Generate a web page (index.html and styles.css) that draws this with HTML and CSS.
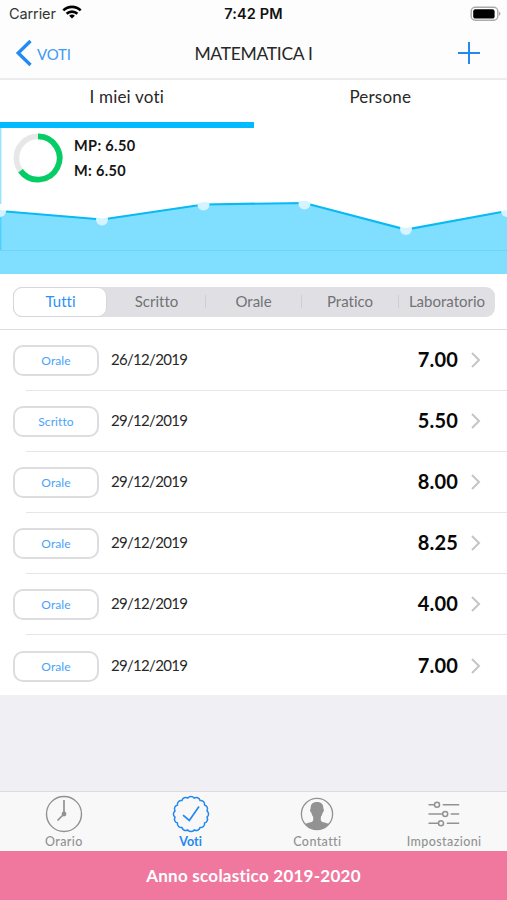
FILE: index.html
```html
<!DOCTYPE html>
<html lang="it">
<head>
<meta charset="utf-8">
<meta name="viewport" content="width=device-width">
<title>Matematica I</title>
<link rel="stylesheet" href="styles.css">
</head>
<body>
<header class="top">
  <div class="status">
    <div class="carrier"><span>Carrier</span>
      <svg width="20" height="14" viewBox="0 0 20 14" fill="none" stroke="#000" stroke-width="2.6"><path d="M1.3 5.4a12.5 12.5 0 0 1 17.4 0M4.6 8.8a7.8 7.8 0 0 1 10.8 0"/><path d="M10 13.6 7.1 10.8a4.2 4.2 0 0 1 5.8 0Z" fill="#000" stroke="none"/></svg>
    </div>
    <span class="time">7:42 PM</span>
    <svg class="battery" width="32" height="16" viewBox="0 0 32 16"><rect x="1.2" y="1.2" width="26.6" height="13" rx="4" fill="#fff" stroke="#aaa" stroke-width="1.4"/><rect x="3.2" y="3.2" width="21.4" height="9.4" rx="2.2"/><path d="M29 5.5q3 2.200 0 4.500Z" fill="#aaa"/></svg>
  </div>
  <nav class="nav">
    <a class="back"><svg width="18" height="28" viewBox="0 0 18 28"><path d="M15.500 2 3.200 14l12.300 12" fill="none" stroke="#2389f3" stroke-width="3.300"/></svg><span>VOTI</span></a>
    <h1 class="title">MATEMATICA I</h1>
    <svg class="plus" width="22" height="22" viewBox="0 0 22 22"><path d="M11 0v22M0 11h22" stroke="#2588f2" stroke-width="2"/></svg>
  </nav>
</header>
<div class="tabs"><div class="tab active"><span class="mine">I miei voti</span></div><div class="tab"><span class="people">Persone</span></div></div>
<section class="chart">
  <svg class="plot" width="507" height="146" viewBox="0 128 507 146">
    <path d="M0 211 102 219.500 203.500 204.500 304.500 203 406 229.500 507 211V274H0Z" fill="#80dfff"/>
    <path d="M0 250.500H507" stroke="#6bd5fa"/>
    <path d="M.7 128V250" stroke="#00bfff" stroke-opacity=".4" stroke-width="1.400"/>
    <path d="M0 211 102 219.500 203.500 204.500 304.500 203 406 229.500 507 211" fill="none" stroke="#09b9f4" stroke-width="2.200"/>
    <g fill="#d5f4ff"><circle cx="0" cy="211" r="6"/><circle cx="102" cy="219.500" r="6"/><circle cx="203.500" cy="204.500" r="6"/><circle cx="304.500" cy="203.500" r="6"/><circle cx="406" cy="229" r="6"/><circle cx="507" cy="211" r="6"/></g>
    <g fill="#fff"><path d="M0 204h7v6.500L0 210ZM96 212h12v5.500l-6 1-6-1ZM197 196h13v6.500l-6-.5-7 1.500ZM298 195h13v7l-6-1h-7ZM400 221h12v6l-6 1-6-1ZM500 204h7v6l-7 1Z"/></g>
  </svg>
  <div class="summary">
    <svg width="50" height="50" viewBox="0 0 50 50" fill="none" stroke-width="5.700"><circle cx="25" cy="25" r="21.600" stroke="#e7e7e7"/><path d="M25 3.400A21.600 21.600 0 1 1 7.530 37.700" stroke="#05cd66"/></svg>
    <div class="means"><span class="mp">MP: 6.50</span><span class="m">M: 6.50</span></div>
  </div>
</section>
<div class="filter"><div class="segments"><span class="selected">Tutti</span><span>Scritto</span><span>Orale</span><span>Pratico</span><span>Laboratorio</span></div></div>
<ul class="grades">
  <li><span class="kind">Orale</span><span class="date">26/12/2019</span><b>7.00</b><svg width="10" height="16" viewBox="0 0 10 16"><path d="m1 1 7 7-7 7"/></svg></li>
  <li><span class="kind written">Scritto</span><span class="date">29/12/2019</span><b>5.50</b><svg width="10" height="16" viewBox="0 0 10 16"><path d="m1 1 7 7-7 7"/></svg></li>
  <li><span class="kind">Orale</span><span class="date">29/12/2019</span><b>8.00</b><svg width="10" height="16" viewBox="0 0 10 16"><path d="m1 1 7 7-7 7"/></svg></li>
  <li><span class="kind">Orale</span><span class="date">29/12/2019</span><b>8.25</b><svg width="10" height="16" viewBox="0 0 10 16"><path d="m1 1 7 7-7 7"/></svg></li>
  <li><span class="kind">Orale</span><span class="date">29/12/2019</span><b>4.00</b><svg width="10" height="16" viewBox="0 0 10 16"><path d="m1 1 7 7-7 7"/></svg></li>
  <li><span class="kind">Orale</span><span class="date">29/12/2019</span><b>7.00</b><svg width="10" height="16" viewBox="0 0 10 16"><path d="m1 1 7 7-7 7"/></svg></li>
</ul>
<nav class="tabbar">
  <a><svg width="38" height="38" viewBox="-19 -19 38 38" fill="none" stroke="#929292" stroke-width="1.400"><circle r="17.500"/><path d="M0-14V0l-6.500 6.500" stroke-width="1.700"/><circle r="1.700" fill="#929292"/></svg><span>Orario</span></a>
  <a class="current"><svg width="38" height="38" viewBox="-19 -19 38 38" fill="none" stroke="#2588ef" stroke-width="1.500"><path d="M15.990-3.180A4 4 0 0 1 15.990 3.180A4 4 0 0 1 13.550 9.060A4 4 0 0 1 9.060 13.550A4 4 0 0 1 3.180 15.990A4 4 0 0 1-3.180 15.990A4 4 0 0 1-9.060 13.550A4 4 0 0 1-13.550 9.060A4 4 0 0 1-15.990 3.180A4 4 0 0 1-15.990-3.180A4 4 0 0 1-13.550-9.060A4 4 0 0 1-9.060-13.550A4 4 0 0 1-3.180-15.990A4 4 0 0 1 3.180-15.990A4 4 0 0 1 9.060-13.550A4 4 0 0 1 13.550-9.060A4 4 0 0 1 15.990-3.180Z"/><path d="m-8 1.200 6.300 5.300L8-7.500" stroke-width="1.700"/></svg><span class="votes">Voti</span></a>
  <a><svg width="38" height="38" viewBox="-19 -19 38 38"><circle r="15.600" fill="none" stroke="#929292" stroke-width="1.300"/><path d="M0-12C4.500-12 6.600-9.500 6.300-5.500 7.500-5 6.700-1.700 5.600-1.300 5.200 1 4.300 2 3.800 3v3.600c1.500 2.500 5.500 2 8.200 3.400C9 13.700 4.500 15.700 0 15.700S-9 13.700-12 10c2.700-1.400 6.700-.9 8.200-3.400V3C-4.300 2-5.200 1-5.600-1.300-6.700-1.700-7.500-5-6.300-5.500-6.600-9.500-4.500-12 0-12Z" fill="#929292"/></svg><span>Contatti</span></a>
  <a><svg width="38" height="38" viewBox="-19 -19 38 38" fill="none" stroke="#929292" stroke-width="1.500"><path d="M-15.500-9.300h6M-1.300-9.300h16.500M-15.500 0h14.200M6.700 0h8.500M-15.500 9.300h10M2.800 9.300h12.400"/><circle cx="-7" cy="-9.300" r="2.500" fill="#f8f8f8"/><circle cx="1.200" cy="0" r="2.500" fill="#f8f8f8"/><circle cx="-3" cy="9.300" r="2.500" fill="#f8f8f8"/></svg><span class="settings">Impostazioni</span></a>
</nav>
<footer class="year"><span>Anno scolastico 2019-2020</span></footer>
</body>
</html>
```
FILE: styles.css
```css
* { box-sizing: border-box; }
body { margin: 0; width: 507px; height: 900px; overflow: hidden; display: flex; flex-direction: column; background: #efeff4; color: #282828; font-family: Lato, sans-serif; font-variant-ligatures: none; }
svg { flex: none; display: block; }
.top { height: 80px; flex: none; background: #fdfdfd; border-bottom: 2px solid #ececec; }
.status { height: 27px; display: grid; grid-template-columns: 1fr auto 1fr; align-items: center; padding: 0 7px 0 9px; font: 14.5px Inter, sans-serif; }
.carrier { display: flex; align-items: center; gap: 6px; color: #333; letter-spacing: -.1px; }
.carrier svg { margin-top: -3px; }
.time { font-weight: 600; color: #111; letter-spacing: .15px; margin-left: -2px; }
.battery { justify-self: end; margin-right: -2px; }
.nav { height: 51px; display: grid; grid-template-columns: 1fr auto 1fr; align-items: center; padding: 0 27px 0 15px; }
.back { display: flex; align-items: center; gap: 4px; color: #3e9af5; font-size: 15px; letter-spacing: -.2px; }
.back span { padding-top: 2px; }
.title { margin: 2px -6px 0 6px; font-size: 17.5px; font-weight: 400; letter-spacing: -.3px; }
.plus { justify-self: end; }
.tabs { height: 48px; flex: none; display: flex; background: #fff; }
.tab { flex: 1; padding-top: 6px; text-align: center; font-size: 17px; line-height: 22px; letter-spacing: .2px; border-bottom: 6px solid #fff; }
.tab.active { border-color: #00bbff; }
.chart { height: 146px; flex: none; display: grid; background: #fff; }
.plot, .summary { grid-area: 1 / 1; }
.summary { display: flex; align-items: flex-start; gap: 11px; padding: 5px 13px; }
.means { display: flex; flex-direction: column; padding-top: 1px; font-size: 14.5px; font-weight: 700; letter-spacing: .35px; line-height: 24.5px; color: #151515; }
.filter { height: 56px; flex: none; padding: 13px 12px 0 13px; background: #fff; border-bottom: 1px solid #dedee0; }
.segments { height: 30px; display: grid; grid-template-columns: 94px 98px 96px 97px 97px; border-radius: 9px; background: #e0e0e4; color: #727276; font-size: 15px; line-height: 28px; text-align: center; }
.segments span { padding-left: 1px; }
.segments span + span + span { background: linear-gradient(#cfcfd3, #cfcfd3) 0 8px / 1px 13px no-repeat; }
.segments .selected { border: 1.5px solid #d5d5da; border-radius: 9px; background: #fff; color: #2d91f6; line-height: 26px; }
.grades { margin: 0; padding: 0; flex: none; height: 365px; display: grid; grid-template-rows: repeat(6, 61.1px); list-style: none; background: #fff; overflow: hidden; }
.grades li { display: flex; align-items: center; padding: 0 26px 0 13px; background: linear-gradient(#e6e6e8, #e6e6e8) 26px 100% / 100% 1px no-repeat; }
.grades li:last-child { background: none; }
.kind { width: 86px; height: 31px; border: 2px solid #dddddf; border-radius: 10px; text-align: center; font-size: 12px; letter-spacing: .1px; line-height: 28px; color: #4aa2fa; }
.date { margin: -3px 0 0 12px; font-size: 15px; letter-spacing: -.7px; }
.grades b { margin: -3px 13px 0 auto; font-size: 20px; letter-spacing: .2px; color: #080808; }
.grades svg { margin-top: -1px; }
.grades svg path { fill: none; stroke: #c5c5c8; stroke-width: 2; }
.tabbar { height: 60px; flex: none; margin-top: auto; display: grid; grid-template-columns: repeat(4, 1fr); background: #f8f8f8; border-top: 1px solid #dcdce0; }
.tabbar a { display: flex; flex-direction: column; align-items: center; padding: 3px 0 0 1px; color: #929292; font-size: 12.5px; font-weight: 500; letter-spacing: .4px; line-height: 17px; }
.tabbar .current { color: #2588ef; font-weight: 700; letter-spacing: 0; }
.year { height: 49px; flex: none; display: flex; align-items: center; justify-content: center; background: #f0789f; color: #fff; font-size: 17px; font-weight: 700; letter-spacing: .25px; }
```
